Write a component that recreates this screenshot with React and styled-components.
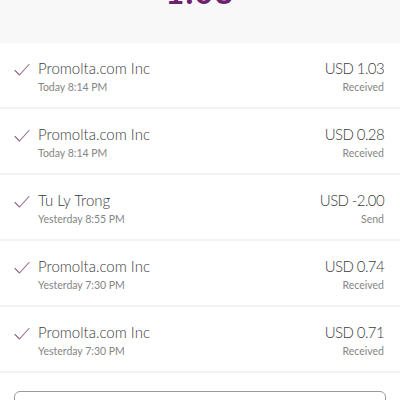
import React from 'react'
import styled, { createGlobalStyle } from 'styled-components'

const Global = createGlobalStyle`
  html, body { margin: 0; padding: 0; background: #ffffff; }
  body { font-family: Lato, "Open Sans", sans-serif; }
`

const transactions = [
  { name: 'Promolta.com Inc', time: 'Today 8:14 PM', amount: 'USD 1.03', status: 'Received' },
  { name: 'Promolta.com Inc', time: 'Today 8:14 PM', amount: 'USD 0.28', status: 'Received' },
  { name: 'Tu Ly Trong', time: 'Yesterday 8:55 PM', amount: 'USD -2.00', status: 'Send' },
  { name: 'Promolta.com Inc', time: 'Yesterday 7:30 PM', amount: 'USD 0.74', status: 'Received' },
  { name: 'Promolta.com Inc', time: 'Yesterday 7:30 PM', amount: 'USD 0.71', status: 'Received' },
]

const Check = () => (
  <svg width="16" height="14" viewBox="0 0 16 14" fill="none">
    <path d="M1 7.5 L5.5 12 L15 1.5" stroke="#94688a" strokeWidth="1.1" strokeLinecap="round" strokeLinejoin="round" />
  </svg>
)

const App = () => (
  <Page>
    <Global />
    <Header>
      <Balance>1.03</Balance>
    </Header>
    <List>
      {transactions.map((t, i) => (
        <Row key={i}>
          <Icon><Check /></Icon>
          <Left>
            <Name>{t.name}</Name>
            <Sub>{t.time}</Sub>
          </Left>
          <Right>
            <Amount>{t.amount}</Amount>
            <Sub>{t.status}</Sub>
          </Right>
        </Row>
      ))}
    </List>
    <Footer>
      <MoreButton />
    </Footer>
  </Page>
)

export default App

const Page = styled.div`
  width: 400px;
  height: 400px;
  overflow: hidden;
  background: #ffffff;
`

const Header = styled.div`
  height: 43px;
  background: #f8f8f9;
  overflow: hidden;
  display: flex;
  justify-content: center;
`

const Balance = styled.div`
  margin-top: -25px;
  font-size: 33px;
  line-height: 32px;
  font-weight: 700;
  color: #6d2270;
  letter-spacing: 1px;
`

const List = styled.div`
  display: flex;
  flex-direction: column;
`

const Row = styled.div`
  display: flex;
  align-items: flex-start;
  height: 66px;
  padding: 15px 16px 0 14px;
  box-sizing: border-box;
  border-bottom: 2px solid #f3f3f4;
`

const Icon = styled.div`
  width: 24px;
  padding-top: 3px;
`

const Left = styled.div`
  flex: 1;
  display: flex;
  flex-direction: column;
  gap: 2px;
`

const Right = styled.div`
  display: flex;
  flex-direction: column;
  align-items: flex-end;
  gap: 2px;
`

const Name = styled.div`
  font-size: 15px;
  line-height: 20px;
  font-weight: 300;
  color: #3c3c3c;
`

const Amount = styled(Name)`
  letter-spacing: -0.6px;
`

const Sub = styled.div`
  font-size: 10.5px;
  line-height: 14px;
  color: #858585;
`

const Footer = styled.div`
  padding: 18px 14px 0 14px;
`

const MoreButton = styled.div`
  height: 40px;
  border: 1.5px solid #9a9a9a;
  border-radius: 6px;
`
